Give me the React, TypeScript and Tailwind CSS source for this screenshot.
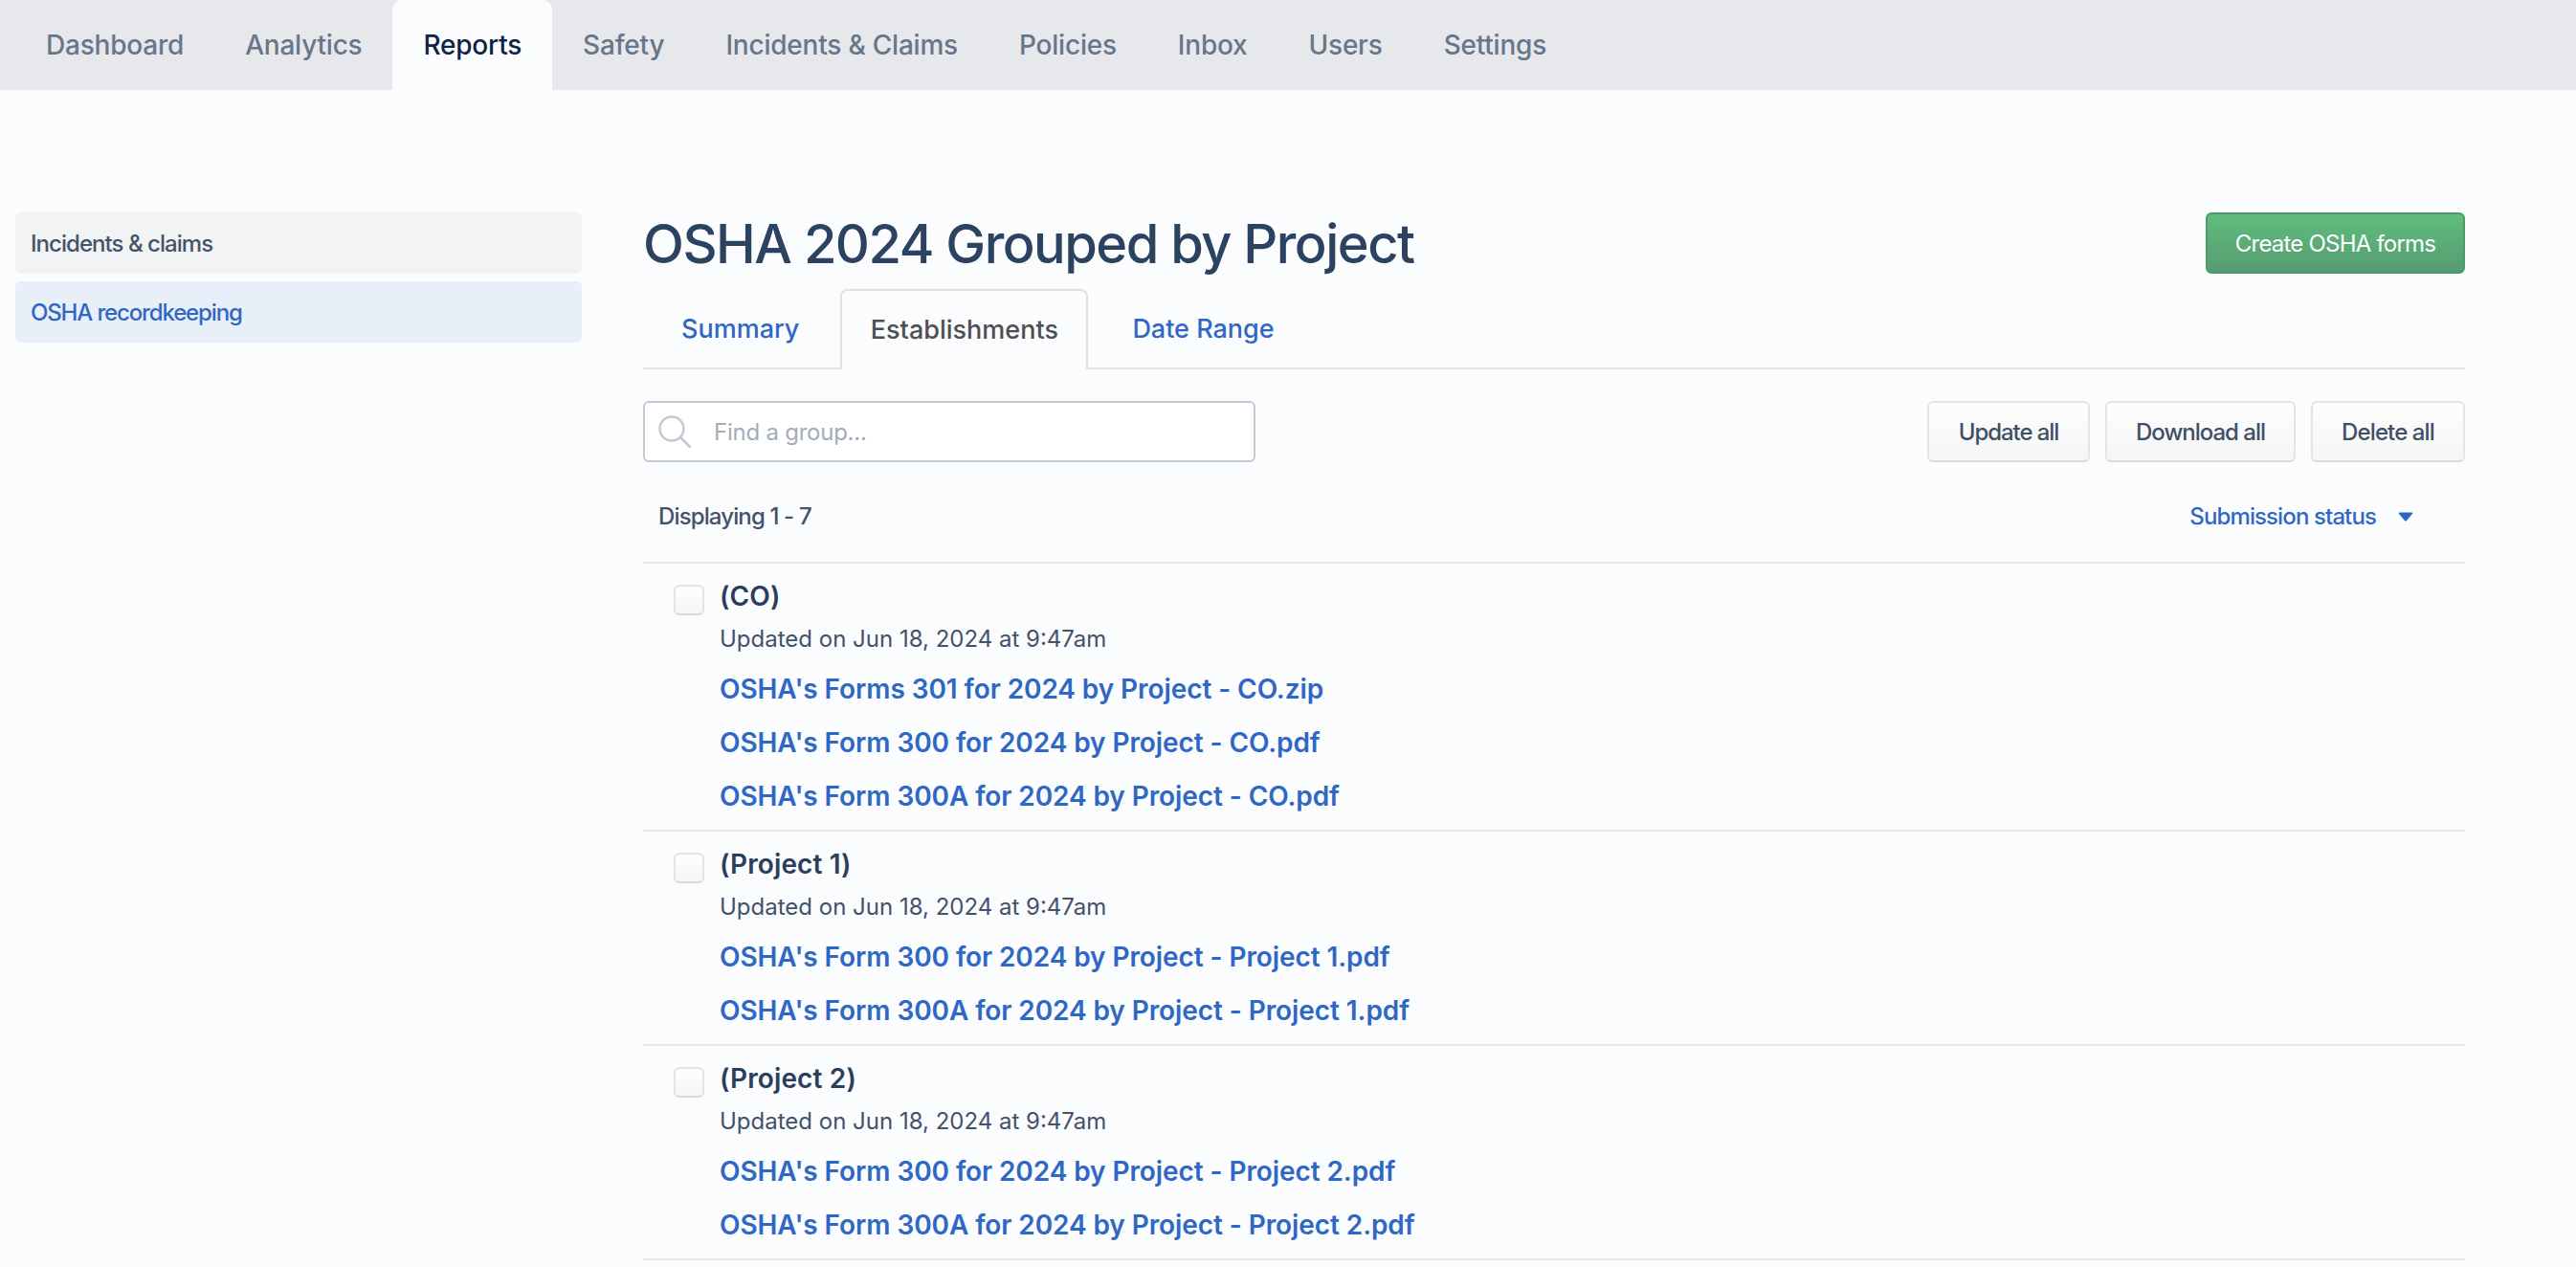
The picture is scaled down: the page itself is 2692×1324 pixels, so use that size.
import React from "react";

const navItems = ["Dashboard", "Analytics", "Reports", "Safety", "Incidents & Claims", "Policies", "Inbox", "Users", "Settings"];

const groups = [
  { title: "(CO)", links: ["OSHA's Forms 301 for 2024 by Project - CO.zip", "OSHA's Form 300 for 2024 by Project - CO.pdf", "OSHA's Form 300A for 2024 by Project - CO.pdf"] },
  { title: "(Project 1)", links: ["OSHA's Form 300 for 2024 by Project - Project 1.pdf", "OSHA's Form 300A for 2024 by Project - Project 1.pdf"] },
  { title: "(Project 2)", links: ["OSHA's Form 300 for 2024 by Project - Project 2.pdf", "OSHA's Form 300A for 2024 by Project - Project 2.pdf"] },
];

function GreyButton({ label, className }: { label: string; className: string }) {
  return (
    <button className={`${className} h-[64px] pt-[2px] rounded-[6px] border-2 border-[#e2e4e8] border-b-[#d9dbe0] bg-gradient-to-b from-[#fdfdfe] to-[#f5f6f6] text-[24px] font-medium text-[#3f4f66]`}>
      {label}
    </button>
  );
}

export default function App() {
  return (
    <div className="min-h-[1324px] h-[1324px] overflow-hidden bg-[#fbfcfe] font-['Inter',sans-serif]">
      <nav className="h-[94px] bg-[#e7e8eb] flex pl-[16px]">
        {navItems.map((n) => (
          <a
            key={n}
            className={
              n === "Reports"
                ? "h-[94px] px-[32px] flex items-center text-[28px] font-medium text-[#0f2344] bg-[#fbfcfe] rounded-t-[10px] tracking-[-0.0075em]"
                : "h-[94px] px-[32px] flex items-center text-[28px] font-medium text-[#67768a] tracking-[-0.0075em]"
            }
          >
            {n}
          </a>
        ))}
      </nav>

      <div className="flex pt-[128px] pl-[16px]">
        <aside className="w-[592px] shrink-0 flex flex-col gap-[8px]">
          <a className="h-[64px] pt-[2px] flex items-center px-[16px] rounded-[6px] bg-[#f2f3f5] text-[24px] font-medium text-[#445369] tracking-[-0.04em]">Incidents &amp; claims</a>
          <a className="h-[64px] pt-[2px] flex items-center px-[16px] rounded-[6px] bg-[#e8eff9] text-[24px] font-medium text-[#2f68c4] tracking-[-0.048em]">OSHA recordkeeping</a>
        </aside>

        <main className="ml-[64px] w-[1904px]">
          <div className="flex items-center justify-between h-[64px]">
            <h1 className="pt-[2px] text-[56px] font-medium text-[#2b4261] leading-[64px] tracking-[-0.027em]">OSHA 2024 Grouped by Project</h1>
            <button className="h-[64px] w-[271px] pt-[2px] rounded-[6px] border-2 border-[#4f9a6c] bg-gradient-to-b from-[#5fbd7c] to-[#569c72] text-[24px] text-white tracking-[-0.033em]">Create OSHA forms</button>
          </div>

          <div className="mt-[16px] h-[84px] flex border-b-2 border-[#e0e2e6] pl-[8px]">
            <a className="h-[84px] pl-[32px] pr-[43px] flex items-center text-[27px] font-medium text-[#2f68c4]">Summary</a>
            <a className="h-[84px] w-[259px] justify-center flex items-center text-[27px] font-medium text-[#4d4f52] border-2 border-b-0 border-[#dfe1e5] rounded-t-[8px] bg-[#fbfcfe]">Establishments</a>
            <a className="h-[84px] pl-[46px] flex items-center text-[27px] font-medium text-[#2f68c4]">Date Range</a>
          </div>

          <div className="mt-[33px] flex justify-between">
            <div className="w-[640px] h-[64px] rounded-[6px] border-2 border-[#c3cad6] bg-white flex items-center pl-[14px]">
              <svg width="34" height="34" viewBox="0 0 34 34" fill="none" className="shrink-0">
                <circle cx="14" cy="14" r="12.5" stroke="#c3c9d3" strokeWidth="2.5" />
                <path d="M23 23 L33 33" stroke="#c3c9d3" strokeWidth="2.5" strokeLinecap="round" />
              </svg>
              <span className="ml-[24px] pt-[2px] text-[24px] text-[#a4acb9] tracking-[-0.01em]">Find a group...</span>
            </div>
            <div className="flex gap-[16px]">
              <GreyButton label="Update all" className="w-[170px] tracking-[-0.045em]" />
              <GreyButton label="Download all" className="w-[199px] tracking-[-0.042em]" />
              <GreyButton label="Delete all" className="w-[161px] tracking-[-0.037em]" />
            </div>
          </div>

          <div className="mt-[9px] h-[97px] flex items-center justify-between pl-[16px] pr-[54px] border-b-2 border-[#e5e7ea]">
            <span className="text-[24px] font-medium text-[#42526a] tracking-[-0.036em]">Displaying 1 - 7</span>
            <span className="flex items-center text-[24px] font-medium text-[#2f68c4] tracking-[-0.037em]">
              Submission status
              <svg width="16" height="10" viewBox="0 0 16 10" className="ml-[23px]">
                <path d="M1.5 0.5 H14.5 Q16 0.5 15 2 L9 9 Q8 10 7 9 L1 2 Q0 0.5 1.5 0.5 Z" fill="#2f68c4" />
              </svg>
            </span>
          </div>

          {groups.map((g) => (
            <section key={g.title} className="border-b-2 border-[#e5e7ea] pt-[16px] pb-[7px] flex">
              <div className="ml-[32px] mt-[6px] w-[32px] h-[32px] shrink-0 rounded-[6px] border-2 border-[#e2e4e8] border-b-[#d5d8dd] bg-gradient-to-b from-[#fdfdfe] to-[#f5f6f6]" />
              <div className="ml-[16px]">
                <div className="text-[28px] leading-[36px] font-semibold text-[#2b3f5c] tracking-[0.005em]">{g.title}</div>
                <div className="mt-[8px] pt-[1px] text-[24px] leading-[36px] text-[#42526a]">Updated on Jun 18, 2024 at 9:47am</div>
                <div className="mt-[6px] flex flex-col">
                  {g.links.map((l) => (
                    <a key={l} className="h-[56px] flex items-center text-[28px] font-semibold text-[#2f68c4] tracking-[-0.003em]">{l}</a>
                  ))}
                </div>
              </div>
            </section>
          ))}
        </main>
      </div>
    </div>
  );
}
